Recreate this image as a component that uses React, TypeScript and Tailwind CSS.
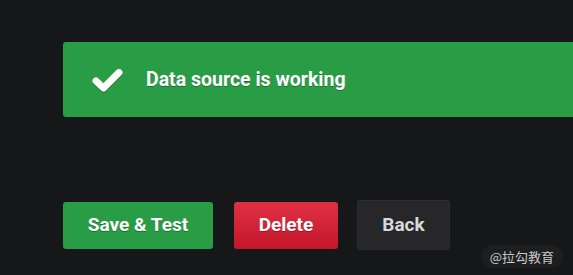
import React from "react";

export default function App() {
  return (
    <div className="relative w-[573px] h-[275px] overflow-hidden bg-[#161719] font-['Roboto',sans-serif]">
      <div className="pl-[63px] pt-[42px]">
        {/* Alert */}
        <div className="flex items-center w-[560px] h-[75px] rounded-[3px] bg-[#299c46] pl-[29px]">
          <svg width="31" height="24" viewBox="0 0 31 24" className="shrink-0 drop-shadow-[0_1px_0_rgba(0,0,0,0.25)]">
            <path d="M4 13 L11.5 20 L27 4.5" fill="none" stroke="#fff" strokeWidth="7" strokeLinecap="round" strokeLinejoin="round" />
          </svg>
          <span className="ml-[23px] text-[19.5px] font-bold text-white [text-shadow:0_1px_0_rgba(0,0,0,0.3)]">
            Data source is working
          </span>
        </div>

        {/* Actions */}
        <div className="flex items-center mt-[83px]">
          <button className="w-[150px] h-[47px] rounded-[3px] bg-[#299c46] text-[19px] font-bold text-white [text-shadow:0_1px_0_rgba(0,0,0,0.3)]">
            Save &amp; Test
          </button>
          <button className="ml-[21px] w-[104px] h-[47px] rounded-[3px] bg-gradient-to-b from-[#e02f44] to-[#c4162a] text-[19px] font-bold text-white [text-shadow:0_1px_0_rgba(0,0,0,0.3)]">
            Delete
          </button>
          <button className="ml-[19px] w-[93px] h-[50px] rounded-[3px] bg-[#27272a] border border-[#2d2d30] text-[19px] font-bold text-[#d8d9da]">
            Back
          </button>
        </div>
      </div>

      {/* Watermark */}
      <div className="absolute right-[10px] bottom-[7px] px-[9px] py-[2px] rounded-full bg-[#1d1e20] text-[13px] text-[#c8c8c8] font-['Noto_Sans_CJK_SC',sans-serif]">
        @拉勾教育
      </div>
    </div>
  );
}
